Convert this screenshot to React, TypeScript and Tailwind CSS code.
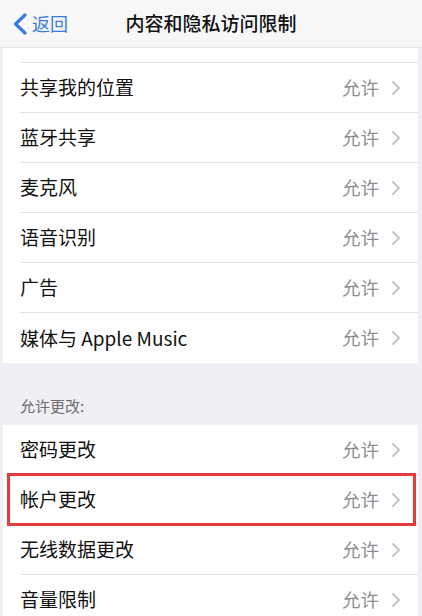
import React from 'react';

const font = { fontFamily: '"Noto Sans CJK SC", "Noto Sans", sans-serif' };

const Chevron = () => (
  <svg width="8" height="14" viewBox="0 0 8 14" fill="none">
    <path d="M1 1l6 6-6 6" stroke="#c4c4c8" strokeWidth="1.8" strokeLinecap="round" strokeLinejoin="round" />
  </svg>
);

const Row = ({ label, last, boxed }: { label: string; last?: boolean; boxed?: boolean }) => (
  <div className="relative h-[50px] pl-[17px]">
    <div className={`flex h-full items-center pr-[18px] ${last ? '' : 'border-b border-[#e2e2e4]'}`}>
      <span className="flex-1 text-[19px] text-[#111]">{label}</span>
      <span className="mr-[13px] text-[18.5px] text-[#8e8e92]">允许</span>
      <Chevron />
    </div>
    {boxed && (
      <div className="absolute -top-[2px] -bottom-[1px] left-[4px] right-[2px] border-[3px] border-[#e63b3d]" />
    )}
  </div>
);

export default function App() {
  const first = ['共享我的位置', '蓝牙共享', '麦克风', '语音识别', '广告', '媒体与 Apple Music'];

  return (
    <div className="h-[616px] w-[422px] overflow-hidden bg-[#efeff4]" style={font}>
      {/* nav bar */}
      <div className="relative flex h-[48px] items-center border-b border-[#e6e6e8] bg-[#f7f7f8]">
        <div className="flex items-center pl-[12px] text-[#3a7be0]">
          <svg width="16" height="22" viewBox="0 0 16 22" fill="none">
            <path d="M13 2L3.5 11l9.5 9" stroke="#3a7be0" strokeWidth="3.2" strokeLinecap="round" strokeLinejoin="round" />
          </svg>
          <span className="ml-[4px] text-[18px]">返回</span>
        </div>
        <div className="absolute inset-x-0 text-center text-[19px] font-medium text-[#111] pointer-events-none">
          内容和隐私访问限制
        </div>
      </div>

      <div className="ml-[3px] mr-[4px] bg-white">
        <div className="ml-[17px] h-[15px] border-b border-[#e2e2e4]" />
        {first.map((l, i) => (
          <Row key={l} label={l} last={i === first.length - 1} />
        ))}
      </div>

      <div className="flex h-[62px] items-end pb-[8px] pl-[20px] text-[15px] text-[#6d6d72]">
        允许更改:
      </div>

      <div className="ml-[3px] mr-[4px] bg-white">
        <Row label="密码更改" />
        <Row label="帐户更改" boxed />
        <Row label="无线数据更改" />
        <Row label="音量限制" />
      </div>
    </div>
  );
}
